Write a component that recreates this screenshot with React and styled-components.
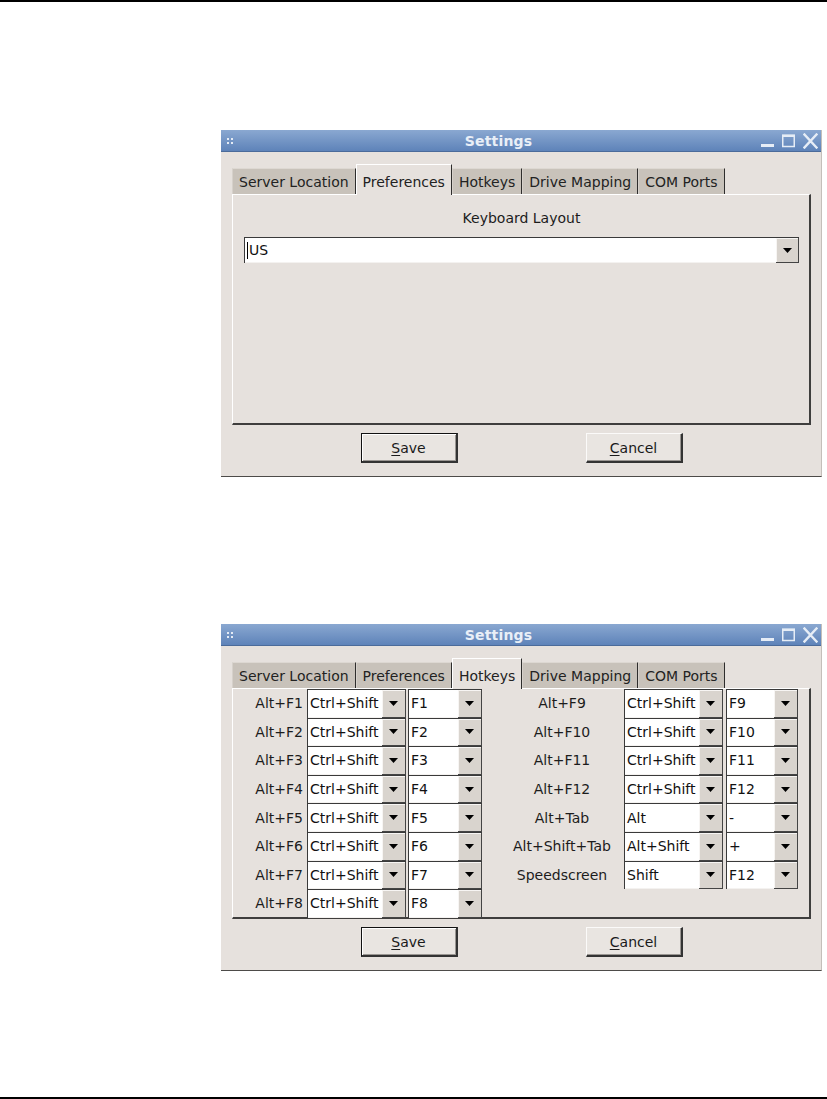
import React from 'react';
import styled, { createGlobalStyle } from 'styled-components';

const Global = createGlobalStyle`
  html, body { margin: 0; padding: 0; background: #ffffff; }
  body { font-family: "DejaVu Sans", "Liberation Sans", sans-serif; color: #1c1c1c; }
  * { box-sizing: border-box; }
`;

const Page = styled.div`
  width: 827px;
  height: 1099px;
  border-top: 2px solid #000;
  border-bottom: 2px solid #000;
  padding: 128px 0 0 221px;
  display: flex;
  flex-direction: column;
  gap: 147px;
`;

const Window = styled.div`
  width: 601px;
  background: #e6e1dd;
  border-bottom: 1px solid #4d4b49;
  border-right: 1px solid #c4bfba;
  display: flex;
  flex-direction: column;
`;

const TitleBar = styled.div`
  height: 22px;
  background: linear-gradient(#8aa8d1, #5e83b9);
  border-bottom: 1px solid #4b6b9a;
  display: flex;
  align-items: center;
  padding: 0 3px 0 6px;
`;

const Grip = styled.div`
  display: grid;
  grid-template-columns: 2px 2px;
  grid-auto-rows: 2px;
  gap: 2px;
  width: 14px;
  span { background: #e4ebf5; }
`;

const Title = styled.div`
  flex: 1;
  text-align: center;
  font-weight: bold;
  font-size: 14px;
  color: #e9eff7;
  letter-spacing: 0.2px;
`;

const Controls = styled.div`
  display: flex;
  align-items: center;
  gap: 8px;
  width: 62px;
  justify-content: flex-end;
  svg { display: block; }
`;

const Body = styled.div`
  padding: 12px 10px 13px 11px;
  display: flex;
  flex-direction: column;
`;

const TabRow = styled.div`
  height: 30px;
  display: flex;
  align-items: flex-end;
`;

const Tab = styled.div`
  position: relative;
  font-size: 14px;
  line-height: 24px;
  padding: ${p => (p.$active ? '5px 6px 1px' : '1px 6px 0')};
  margin-bottom: ${p => (p.$active ? '-1px' : '0')};
  background: ${p => (p.$active ? '#e6e1dd' : '#c8c2ba')};
  border-top: 1px solid ${p => (p.$active ? '#ffffff' : '#ddd8d2')};
  border-left: 1px solid ${p => (p.$active ? '#ffffff' : '#d6d1cb')};
  border-right: 1px solid #2e2d2c;
  z-index: ${p => (p.$active ? 1 : 0)};
  color: #222;
  white-space: nowrap;
`;

const Panel = styled.div`
  height: 231px;
  border-top: 1px solid #ffffff;
  border-left: 1px solid #ffffff;
  border-right: 2px solid #3f3e3d;
  border-bottom: 2px solid #3f3e3d;
  background: #e6e1dd;
  padding: ${p => p.$pad || '0'};
  display: flex;
  flex-direction: ${p => p.$dir || 'row'};
`;

const FieldLabel = styled.div`
  text-align: center;
  font-size: 14px;
  line-height: 18px;
  margin-bottom: 10px;
`;

const Combo = styled.div`
  display: flex;
  height: ${p => p.$h || '100%'};
  width: ${p => p.$w || 'auto'};
  background: #ffffff;
  border-top: 1px solid #3a3a3a;
  border-left: 1px solid #3a3a3a;
`;

const Entry = styled.div`
  flex: 1;
  display: flex;
  align-items: center;
  padding-left: 2px;
  font-size: 14px;
  color: #111;
  border-bottom: 1px solid #f4f2f0;
  white-space: nowrap;
  overflow: hidden;
`;

const Caret = styled.span`
  width: 1px;
  height: 17px;
  background: #000;
  margin-right: 1px;
`;

const DropButton = styled.div`
  width: ${p => p.$w || '24px'};
  flex: none;
  background: #d9d4ce;
  box-shadow: inset 1px 1px 0 #f7f5f3;
  border-right: 1px solid #444;
  border-bottom: 1px solid #444;
  display: flex;
  align-items: center;
  justify-content: center;
`;

const ButtonRow = styled.div`
  margin-top: 8px;
  display: flex;
  justify-content: center;
  gap: 128px;
`;

const PushButton = styled.button`
  width: 97px;
  height: 30px;
  font-family: inherit;
  font-size: 14px;
  color: #1a1a1a;
  background: #e9e5e1;
  padding: 0;
  border: ${p => (p.$default ? '1px solid #111' : '0')};
  border-top: 1px solid ${p => (p.$default ? '#111' : '#fbfaf9')};
  border-left: 1px solid ${p => (p.$default ? '#111' : '#fbfaf9')};
  border-right: 2px solid #333;
  border-bottom: 2px solid #333;
  box-shadow: ${p => (p.$default ? 'inset 1px 1px 0 #ffffff, inset -1px -1px 0 #9a9692' : 'inset -1px -1px 0 #9a9692')};
  u { text-decoration: underline; text-underline-offset: 2px; }
`;

const HotkeyArea = styled.div`
  display: flex;
  align-items: flex-start;
  gap: 21px;
`;

const KeyTable = styled.div`
  display: grid;
  grid-template-columns: ${p => p.$cols};
  grid-auto-rows: 28.6px;
  column-gap: ${p => p.$gap};
  align-items: stretch;
`;

const KeyLabel = styled.div`
  display: flex;
  align-items: center;
  justify-content: ${p => (p.$center ? 'center' : 'flex-end')};
  padding-right: ${p => (p.$center ? '0' : '2px')};
  font-size: 14px;
  white-space: nowrap;
`;

const Arrow = () => (
  <svg width="9" height="5" viewBox="0 0 9 5">
    <polygon points="0,0 9,0 4.5,5" fill="#000" />
  </svg>
);

const WindowHeader = () => (
  <TitleBar>
    <Grip>
      <span /><span /><span /><span />
    </Grip>
    <Title>Settings</Title>
    <Controls>
      <svg width="13" height="14" viewBox="0 0 13 14">
        <rect x="0" y="10" width="13" height="3" fill="#e6edf6" />
      </svg>
      <svg width="13" height="14" viewBox="0 0 13 14">
        <rect x="0.75" y="1.5" width="11.5" height="11" fill="none" stroke="#e6edf6" strokeWidth="1.5" />
        <rect x="0" y="0.5" width="13" height="2.5" fill="#e6edf6" />
      </svg>
      <svg width="15" height="16" viewBox="0 0 15 16">
        <path d="M1.5 1.5 L13.5 14.5 M13.5 1.5 L1.5 14.5" stroke="#e6edf6" strokeWidth="2.4" strokeLinecap="square" />
      </svg>
    </Controls>
  </TitleBar>
);

const TABS = ['Server Location', 'Preferences', 'Hotkeys', 'Drive Mapping', 'COM Ports'];

const Tabs = ({ active }) => (
  <TabRow>
    {TABS.map(t => (
      <Tab key={t} $active={t === active}>{t}</Tab>
    ))}
  </TabRow>
);

const Buttons = () => (
  <ButtonRow>
    <PushButton $default><u>S</u>ave</PushButton>
    <PushButton><u>C</u>ancel</PushButton>
  </ButtonRow>
);

const SmallCombo = ({ value, w }) => (
  <Combo $w={w}>
    <Entry>{value}</Entry>
    <DropButton><Arrow /></DropButton>
  </Combo>
);

const LEFT = [
  ['Alt+F1', 'Ctrl+Shift', 'F1'],
  ['Alt+F2', 'Ctrl+Shift', 'F2'],
  ['Alt+F3', 'Ctrl+Shift', 'F3'],
  ['Alt+F4', 'Ctrl+Shift', 'F4'],
  ['Alt+F5', 'Ctrl+Shift', 'F5'],
  ['Alt+F6', 'Ctrl+Shift', 'F6'],
  ['Alt+F7', 'Ctrl+Shift', 'F7'],
  ['Alt+F8', 'Ctrl+Shift', 'F8'],
];

const RIGHT = [
  ['Alt+F9', 'Ctrl+Shift', 'F9'],
  ['Alt+F10', 'Ctrl+Shift', 'F10'],
  ['Alt+F11', 'Ctrl+Shift', 'F11'],
  ['Alt+F12', 'Ctrl+Shift', 'F12'],
  ['Alt+Tab', 'Alt', '-'],
  ['Alt+Shift+Tab', 'Alt+Shift', '+'],
  ['Speedscreen', 'Shift', 'F12'],
];

export default function App() {
  return (
    <>
      <Global />
      <Page>
        <Window>
          <WindowHeader />
          <Body>
            <Tabs active="Preferences" />
            <Panel $dir="column" $pad="14px 10px 0 11px">
              <FieldLabel>Keyboard Layout</FieldLabel>
              <Combo $h="26px">
                <Entry><Caret />US</Entry>
                <DropButton $w="23px"><Arrow /></DropButton>
              </Combo>
            </Panel>
            <Buttons />
          </Body>
        </Window>

        <Window>
          <WindowHeader />
          <Body>
            <Tabs active="Hotkeys" />
            <Panel>
              <HotkeyArea>
                <KeyTable $cols="72px 99px 74px" $gap="2px">
                  {LEFT.map(([l, m, k]) => (
                    <React.Fragment key={l}>
                      <KeyLabel>{l}</KeyLabel>
                      <SmallCombo value={m} />
                      <SmallCombo value={k} />
                    </React.Fragment>
                  ))}
                </KeyTable>
                <KeyTable $cols="118px 99px 72px" $gap="3px">
                  {RIGHT.map(([l, m, k]) => (
                    <React.Fragment key={l}>
                      <KeyLabel $center>{l}</KeyLabel>
                      <SmallCombo value={m} />
                      <SmallCombo value={k} />
                    </React.Fragment>
                  ))}
                </KeyTable>
              </HotkeyArea>
            </Panel>
            <Buttons />
          </Body>
        </Window>
      </Page>
    </>
  );
}
